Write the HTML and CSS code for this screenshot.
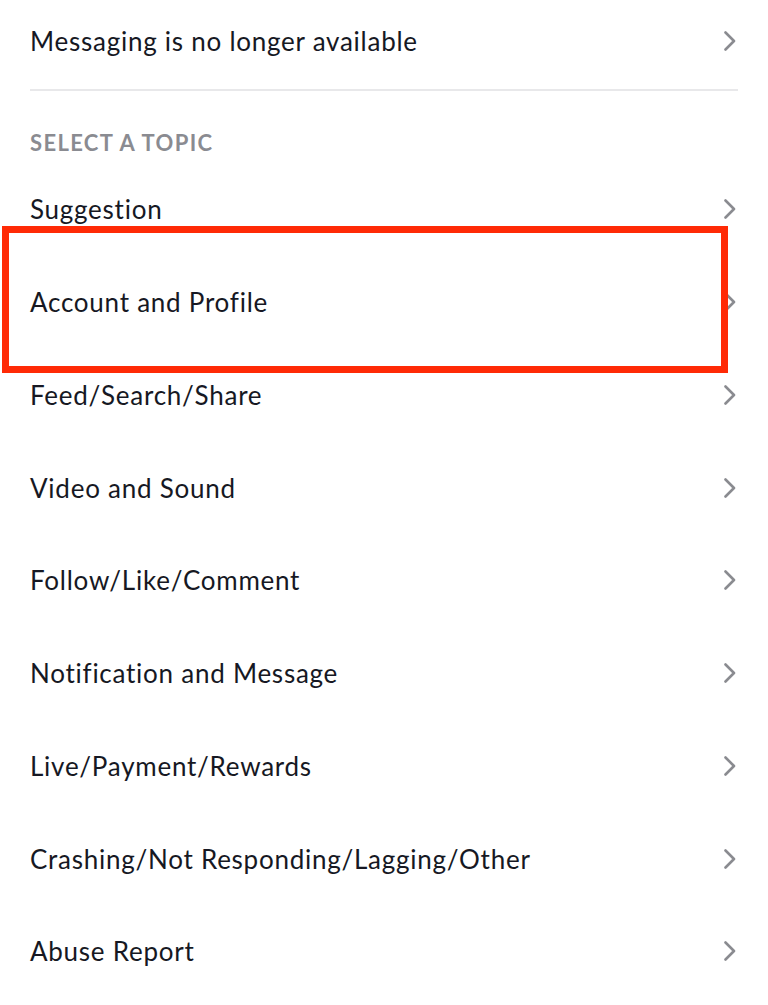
FILE: index.html
```html
<!DOCTYPE html>
<html>
<head>
<meta charset="utf-8">
<link rel="stylesheet" href="styles.css">
</head>
<body>
<div class="page">
  <div class="row top-row">
    <span class="label">Messaging is no longer available</span>
    <svg class="chev" viewBox="0 0 12 20"><path d="M1.5 1.5 L10 10 L1.5 18.5"/></svg>
  </div>
  <div class="divider"></div>
  <div class="section">SELECT A TOPIC</div>
  <div class="row"><span class="label">Suggestion</span><svg class="chev" viewBox="0 0 12 20"><path d="M1.5 1.5 L10 10 L1.5 18.5"/></svg></div>
  <div class="row highlighted"><span class="label">Account and Profile</span><svg class="chev" viewBox="0 0 12 20"><path d="M1.5 1.5 L10 10 L1.5 18.5"/></svg><div class="highlight-box"></div></div>
  <div class="row"><span class="label">Feed/Search/Share</span><svg class="chev" viewBox="0 0 12 20"><path d="M1.5 1.5 L10 10 L1.5 18.5"/></svg></div>
  <div class="row"><span class="label">Video and Sound</span><svg class="chev" viewBox="0 0 12 20"><path d="M1.5 1.5 L10 10 L1.5 18.5"/></svg></div>
  <div class="row"><span class="label">Follow/Like/Comment</span><svg class="chev" viewBox="0 0 12 20"><path d="M1.5 1.5 L10 10 L1.5 18.5"/></svg></div>
  <div class="row"><span class="label">Notification and Message</span><svg class="chev" viewBox="0 0 12 20"><path d="M1.5 1.5 L10 10 L1.5 18.5"/></svg></div>
  <div class="row"><span class="label">Live/Payment/Rewards</span><svg class="chev" viewBox="0 0 12 20"><path d="M1.5 1.5 L10 10 L1.5 18.5"/></svg></div>
  <div class="row"><span class="label">Crashing/Not Responding/Lagging/Other</span><svg class="chev" viewBox="0 0 12 20"><path d="M1.5 1.5 L10 10 L1.5 18.5"/></svg></div>
  <div class="row"><span class="label">Abuse Report</span><svg class="chev" viewBox="0 0 12 20"><path d="M1.5 1.5 L10 10 L1.5 18.5"/></svg></div>
</div>
</body>
</html>
```
FILE: styles.css
```css
html, body {
  margin: 0;
  padding: 0;
  background: #ffffff;
}
body {
  font-family: "Lato", "Liberation Sans", sans-serif;
  color: #161823;
  overflow: hidden;
}
.page {
  width: 768px;
  height: 1005px;
  display: flex;
  flex-direction: column;
}
.row {
  position: relative;
  height: 92.75px;
  flex: 0 0 auto;
  display: flex;
  align-items: center;
  justify-content: space-between;
  padding: 0 32px 0 30px;
}
.top-row {
  height: 89px;
  padding-bottom: 8px;
  box-sizing: border-box;
}
.label {
  font-size: 26px;
  line-height: 30px;
  letter-spacing: 0.75px;
}
.chev {
  width: 12px;
  height: 20px;
  fill: none;
  stroke: #8a8b90;
  stroke-width: 2.6;
  stroke-linecap: round;
  stroke-linejoin: round;
}
.divider {
  height: 2px;
  margin: 0 30px;
  background: #e8e8ea;
  flex: 0 0 auto;
}
.section {
  height: 72px;
  box-sizing: border-box;
  padding: 30px 30px 0;
  flex: 0 0 auto;
  display: flex;
  align-items: center;
  font-size: 22px;
  font-weight: 700;
  color: #8a8b91;
  letter-spacing: 1.35px;
}
.highlight-box {
  position: absolute;
  left: 2px;
  right: 40px;
  top: -30px;
  bottom: -24px;
  border: 7px solid #ff2a06;
  pointer-events: none;
}
```
